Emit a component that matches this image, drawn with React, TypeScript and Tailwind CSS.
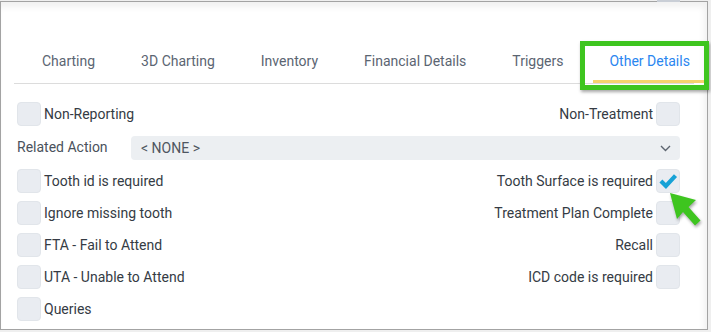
import React from "react";

const tabs = ["Charting", "3D Charting", "Inventory", "Financial Details", "Triggers", "Other Details"];

type Row = { left?: string; right?: string; rightChecked?: boolean };

const rows: Row[] = [
  { left: "Tooth id is required", right: "Tooth Surface is required", rightChecked: true },
  { left: "Ignore missing tooth", right: "Treatment Plan Complete" },
  { left: "FTA - Fail to Attend", right: "Recall" },
  { left: "UTA - Unable to Attend", right: "ICD code is required" },
  { left: "Queries" },
];

function Box({ checked = false }: { checked?: boolean }) {
  return (
    <div className="w-6 h-6 rounded-[4px] bg-[#e9ecf1] border border-[#e1e5ea] flex items-center justify-center shrink-0">
      {checked && (
        <svg className="w-[20px] h-[20px]" viewBox="0 0 24 24" fill="none">
          <path d="M3.5 12l6 6L21 5.5" stroke="#17a2d6" strokeWidth={5} strokeLinejoin="miter" />
        </svg>
      )}
    </div>
  );
}

function LeftCheck({ label }: { label: string }) {
  return (
    <div className="flex items-center gap-[3px]">
      <Box />
      <span className="text-[14px] text-[#353b44] leading-none">{label}</span>
    </div>
  );
}

function RightCheck({ label, checked }: { label: string; checked?: boolean }) {
  return (
    <div className="flex items-center gap-[3px]">
      <span className="text-[14px] text-[#353b44] leading-none">{label}</span>
      <Box checked={checked} />
    </div>
  );
}

export default function App() {
  return (
    <div
      className="relative w-[711px] h-[332px] bg-[#efefef] overflow-hidden"
      style={{ fontFamily: "Roboto, 'Liberation Sans', sans-serif" }}
    >
      <div className="mt-px w-[708px] h-[329px] bg-white border border-[#a3a3a3] shadow-[inset_-3px_5px_6px_rgba(0,0,0,0.06)] flex flex-col">
        {/* tab strip */}
        <div className="ml-[13px] mr-[13px] mt-[35px] flex border-b border-[#dcdcdc]">
          {tabs.map((t, i) => {
            const active = i === tabs.length - 1;
            return (
              <div
                key={t}
                className={`h-[46px] pt-[5px] flex items-center shrink-0 whitespace-nowrap px-4 text-[14px] border-b-[3px] ${i > 0 ? "ml-[14px]" : "ml-[12px]"} ${
                  active ? "border-[#f5d36e] text-[#2a86f0]" : "border-transparent text-[#5b6572]"
                }`}
              >
                {t}
              </div>
            );
          })}
        </div>

        <div className="pl-4 pr-[27px] flex flex-col">
          <div className="mt-[18px] flex justify-between">
            <LeftCheck label="Non-Reporting" />
            <RightCheck label="Non-Treatment" />
          </div>

          <div className="mt-[10px] flex items-start">
            <span className="w-[114px] pt-[1px] text-[14px] text-[#4a525c] leading-5">Related Action</span>
            <div className="flex-1 h-6 rounded-[4px] bg-[#eceff2] flex items-center justify-between pl-[10px] pr-[9px]">
              <span className="text-[14px] text-[#4f5661]">&lt; NONE &gt;</span>
              <svg className="w-[11px] h-[7px]" viewBox="0 0 11 7" fill="none">
                <path d="M1 1l4.5 4.5L10 1" stroke="#5d6570" strokeWidth={1.4} />
              </svg>
            </div>
          </div>

          <div className="mt-[9px] flex flex-col gap-2">
            {rows.map((r, i) => (
              <div key={i} className="flex justify-between">
                {r.left ? <LeftCheck label={r.left} /> : <div />}
                {r.right && <RightCheck label={r.right} checked={r.rightChecked} />}
              </div>
            ))}
          </div>
        </div>
      </div>

      {/* scroll thumb peeking at top */}
      <div className="absolute left-[657px] top-0 w-[23px] h-[2px] bg-[#c9ced6]" />

      {/* highlight box */}
      <div className="absolute left-[580px] top-[41px] w-[129px] h-[49px] border-[5px] border-[#3ec51f] shadow-[1px_2px_3px_rgba(0,0,0,0.35)]" />

      {/* pointer arrow */}
      <svg className="absolute left-0 top-0 w-[711px] h-[332px] pointer-events-none" viewBox="0 0 711 332">
        <g style={{ filter: "drop-shadow(1px 2px 1.5px rgba(0,0,0,0.35))" }}>
          <polygon
            points="670,193 696,200 688.5,207 700.5,220.5 695,225.5 683,212 677,219"
            fill="#3ec51f"
          />
        </g>
      </svg>
    </div>
  );
}
